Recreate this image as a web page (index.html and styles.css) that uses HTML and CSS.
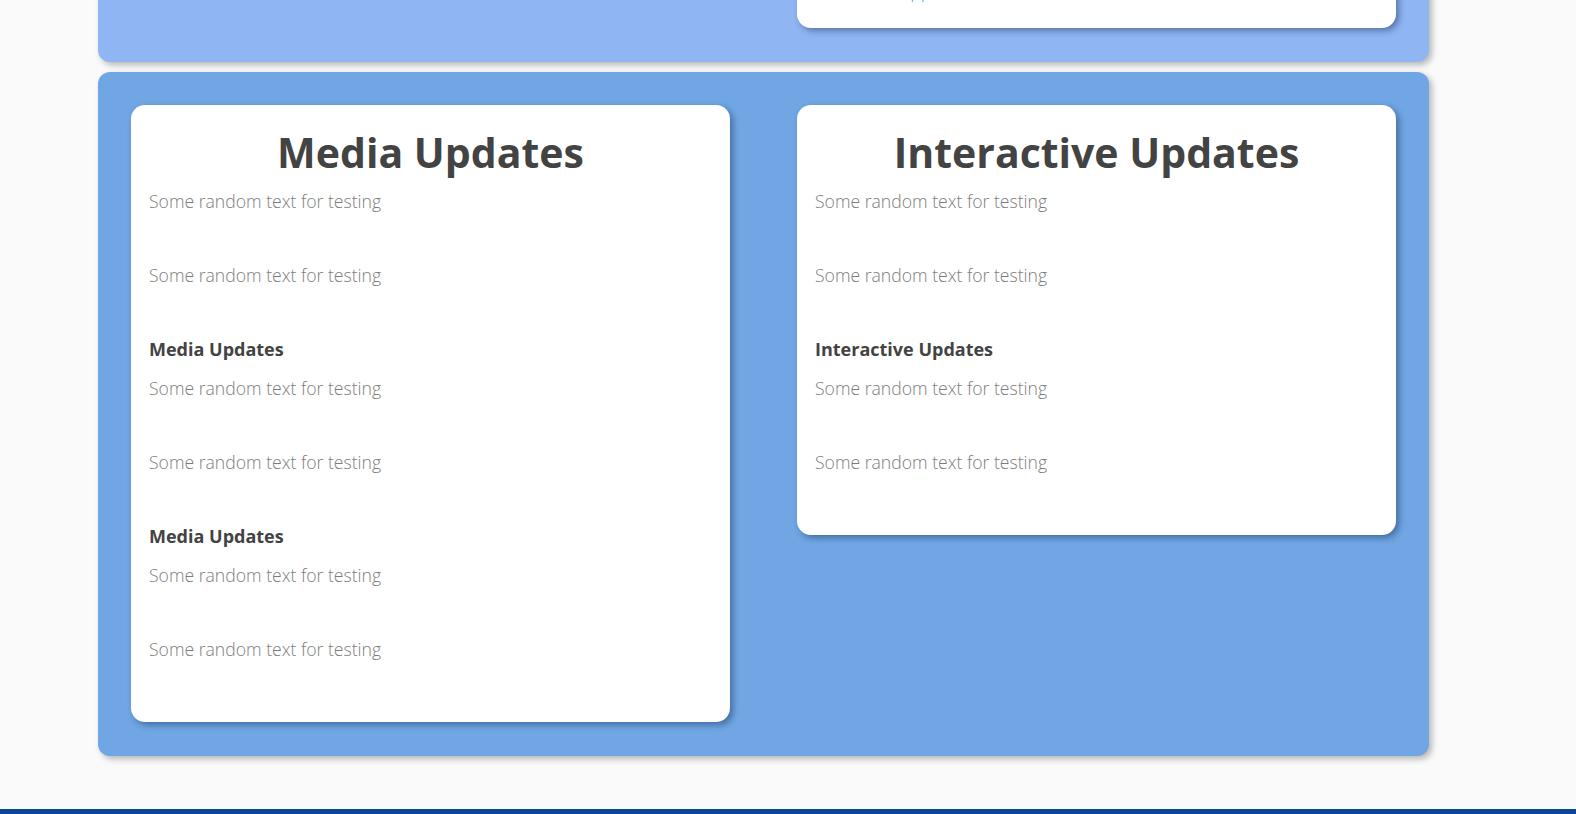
FILE: index.html
```html
<!DOCTYPE html>
<html lang="en">
<head>
<meta charset="utf-8">
<title>Updates</title>
<link rel="stylesheet" href="styles.css">
</head>
<body>
<div class="page">
  <section class="panel panel-light panel-top">
    <div class="card card-short"></div>
    <div class="card card-tall">
      <p class="text">Some random text for testing</p>
      <a class="link" href="#">See all the apps</a>
    </div>
  </section>

  <section class="panel panel-main">
    <div class="card">
      <h2 class="card-title">Media Updates</h2>
      <p class="text">Some random text for testing</p>
      <p class="text">Some random text for testing</p>
      <h4 class="card-sub">Media Updates</h4>
      <p class="text">Some random text for testing</p>
      <p class="text">Some random text for testing</p>
      <h4 class="card-sub">Media Updates</h4>
      <p class="text">Some random text for testing</p>
      <p class="text">Some random text for testing</p>
    </div>
    <div class="card">
      <h2 class="card-title">Interactive Updates</h2>
      <p class="text">Some random text for testing</p>
      <p class="text">Some random text for testing</p>
      <h4 class="card-sub">Interactive Updates</h4>
      <p class="text">Some random text for testing</p>
      <p class="text">Some random text for testing</p>
    </div>
  </section>

  <footer class="footer"></footer>
</div>
</body>
</html>
```

FILE: styles.css
```css
* { box-sizing: border-box; }

html, body {
  margin: 0;
  padding: 0;
  background: #fafafa;
  font-family: "Open Sans", "Liberation Sans", sans-serif;
  overflow: hidden;
}

.page {
  padding-left: 98px;
}

.panel {
  width: 1331px;
  display: grid;
  grid-template-columns: 1fr 1fr;
  column-gap: 67px;
  align-items: start;
  padding: 33px 33px 34px 33px;
  border-radius: 12px;
  box-shadow: 3px 3px 6px rgba(0, 0, 0, 0.28);
}

.panel-light {
  background: #8fb6f3;
}

.panel-top {
  margin-top: -205px;
}

.panel-main {
  background: #6fa6e3;
  margin-top: 10px;
}

.card {
  background: #ffffff;
  border-radius: 14px;
  padding: 20px 18px 12px 18px;
  box-shadow: 3px 3px 6px rgba(20, 40, 80, 0.45);
}

.card-short {
  height: 150px;
}

.card-tall {
  height: 200px;
  display: flex;
  flex-direction: column;
  justify-content: flex-end;
  padding-bottom: 23px;
}

.card-title {
  margin: 0 0 9px 0;
  text-align: center;
  font-size: 41px;
  line-height: 54px;
  font-weight: 700;
  color: #434343;
}

.card-sub {
  margin: 0 0 12px 0;
  font-size: 18px;
  line-height: 27px;
  font-weight: 700;
  color: #434343;
}

.text {
  margin: 0 0 47px 0;
  font-size: 17.6px;
  line-height: 27px;
  font-weight: 300;
  color: #7c7c7c;
}

.card-tall .text {
  margin-bottom: 20px;
}

.link {
  font-size: 17.6px;
  line-height: 27px;
  font-weight: 300;
  color: #2aa6e6;
  text-decoration: none;
}

.footer {
  margin-top: 53px;
  margin-left: -98px;
  height: 40px;
  background: #0a4494;
}
```
